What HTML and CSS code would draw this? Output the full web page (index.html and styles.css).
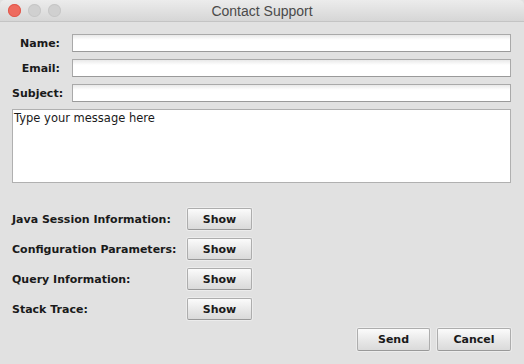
FILE: index.html
```html
<!DOCTYPE html>
<html lang="en">
  <head>
    <meta charset="UTF-8" />
    <link rel="stylesheet" href="styles.css">
    <title>Contact Support</title>
  </head>
  <body>
    <div class="window">
      <div class="titlebar">
        <div class="lights">
          <span class="light close"></span>
          <span class="light"></span>
          <span class="light"></span>
        </div>
        <div class="title">Contact Support</div>
      </div>

      <div class="content">
        <div class="fields">
          <label for="name">Name:</label>
          <input type="text" id="name" />
          <label for="email">Email:</label>
          <input type="text" id="email" />
          <label for="subject">Subject:</label>
          <input type="text" id="subject" />
        </div>

        <textarea class="message">Type your message here</textarea>

        <div class="details">
          <span class="detail-label">Java Session Information:</span>
          <button class="btn">Show</button>
          <span class="detail-label">Configuration Parameters:</span>
          <button class="btn">Show</button>
          <span class="detail-label">Query Information:</span>
          <button class="btn">Show</button>
          <span class="detail-label">Stack Trace:</span>
          <button class="btn">Show</button>
        </div>

        <div class="actions">
          <button class="btn send">Send</button>
          <button class="btn cancel">Cancel</button>
        </div>
      </div>
    </div>
  </body>
</html>
```

FILE: styles.css
```css
html,
body {
  margin: 0;
  padding: 0;
  height: 100%;
}

body {
  background: #e1e1e1;
  font-family: "DejaVu Sans", sans-serif;
  color: #1a1a1a;
}

.window {
  width: 524px;
  height: 364px;
  border-radius: 5px 5px 0 0;
  overflow: hidden;
  background: #e1e1e1;
}

.titlebar {
  height: 21px;
  border-bottom: 1px solid #c4c4c4;
  background: linear-gradient(to bottom, #ececec, #d6d6d6);
  display: flex;
  align-items: center;
  position: relative;
}

.lights {
  display: flex;
  gap: 7px;
  padding-left: 8px;
}

.light {
  width: 13px;
  height: 13px;
  border-radius: 50%;
  background: #d0d0d0;
  box-shadow: inset 0 0 0 1px #c6c6c6;
}

.light.close {
  background: #ee6b5f;
  box-shadow: inset 0 0 0 1px #e0584c;
}

.title {
  position: absolute;
  left: 0;
  right: 0;
  text-align: center;
  font-family: "Liberation Sans", sans-serif;
  font-size: 14px;
  color: #4a4a4a;
}

.content {
  padding: 12px 13px 0 12px;
}

.fields {
  display: grid;
  grid-template-columns: 48px 1fr;
  column-gap: 12px;
  row-gap: 7px;
  align-items: center;
}

.fields label {
  text-align: right;
  font-weight: bold;
  font-size: 11px;
  white-space: nowrap;
}

input[type="text"] {
  height: 18px;
  box-sizing: border-box;
  margin: 0;
  padding: 0 3px;
  border: 1px solid #a9a9a9;
  border-bottom-color: #9a9a9a;
  background: linear-gradient(to bottom, #e9e9e9, #ffffff 5px);
  outline: none;
}

.message {
  display: block;
  box-sizing: border-box;
  width: 499px;
  height: 74px;
  margin: 7px 0 0 0;
  padding: 1px 1px;
  border: 1px solid #b0b0b0;
  background: #fff;
  resize: none;
  outline: none;
  font-family: "DejaVu Sans", sans-serif;
  font-size: 11.5px;
  color: #1a1a1a;
}

.details {
  display: grid;
  grid-template-columns: 175px 65px;
  row-gap: 8px;
  align-items: center;
  margin-top: 25px;
}

.detail-label {
  font-weight: bold;
  font-size: 11px;
  white-space: nowrap;
}

.btn {
  height: 22px;
  margin: 0;
  padding: 0;
  border: 1px solid #adadad;
  border-bottom-color: #999;
  border-radius: 2px;
  background: linear-gradient(to bottom, #fbfbfb, #e6e6e6 60%, #dadada);
  box-shadow: 0 0 0 1px #ececec;
  font-family: "DejaVu Sans", sans-serif;
  font-weight: bold;
  font-size: 11px;
  color: #1a1a1a;
}

.actions {
  display: flex;
  justify-content: flex-end;
  gap: 7px;
  margin-top: 8px;
}

.send {
  width: 73px;
  height: 23px;
}

.cancel {
  width: 74px;
  height: 23px;
}
```
